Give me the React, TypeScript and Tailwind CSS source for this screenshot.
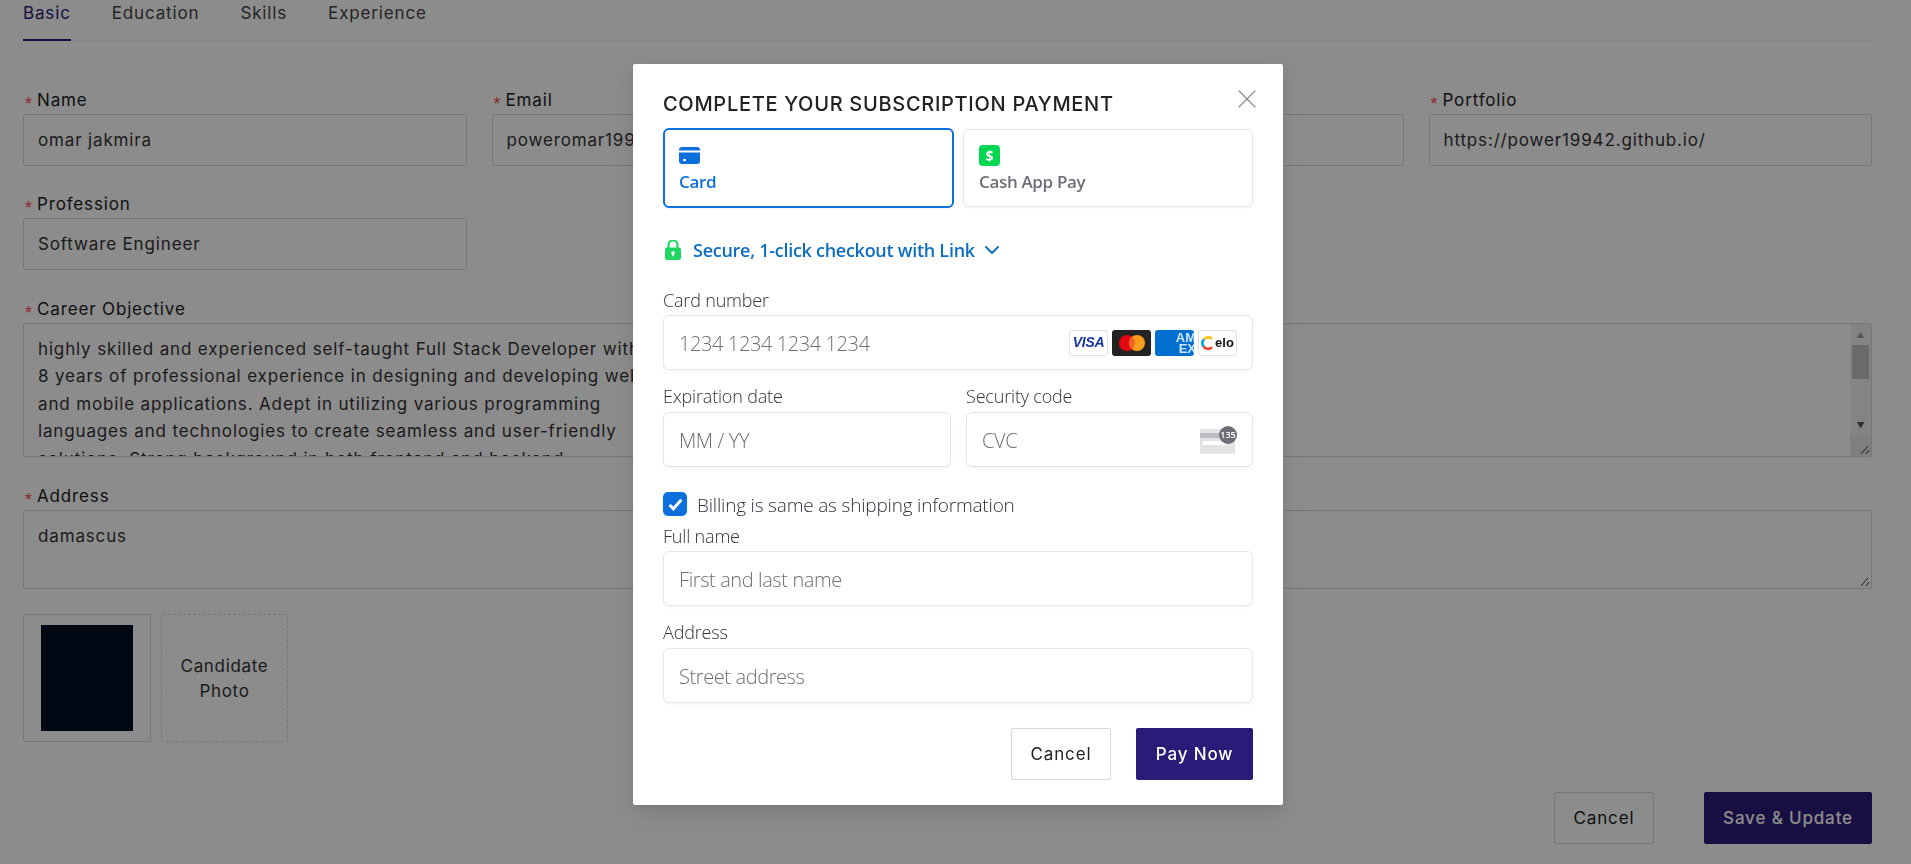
import { ChevronDown, X } from "lucide-react";

const pageFont = "font-['Inter',sans-serif]";
const stripeFont = "font-['Open_Sans',sans-serif]";

const objective = `highly skilled and experienced self-taught Full Stack Developer with
8 years of professional experience in designing and developing web
and mobile applications. Adept in utilizing various programming
languages and technologies to create seamless and user-friendly
solutions. Strong background in both frontend and backend`;

function Label({ text }: { text: string }) {
  return (
    <div className="flex h-[24px] items-center mb-[2px] pt-[2px] text-[17px] tracking-[0.05em] text-[#222]">
      <span className="w-[14px] translate-y-[4px] font-['Liberation_Mono',monospace] text-[18px] tracking-normal text-[#ff4d4f]">*</span>
      {text}
    </div>
  );
}

function Field({ label, value }: { label: string; value: string }) {
  return (
    <div>
      <Label text={label} />
      <input
        readOnly
        defaultValue={value}
        className="block w-full h-[52px] px-[14px] border border-[#d9d9d9] rounded-[2px] bg-white text-[17px] tracking-[0.05em] text-[#333] outline-none"
      />
    </div>
  );
}

function ResizeGrip() {
  return (
    <svg width="10" height="10" viewBox="0 0 10 10" className="text-[#333]">
      <path d="M1 9 8 1M6 9 9 5" stroke="currentColor" strokeWidth="1" fill="none" />
    </svg>
  );
}

function Background() {
  return (
    <div className={`${pageFont} h-[864px] overflow-hidden bg-white pl-[23px] pr-[39px]`}>
      <div className="flex gap-[41px] border-b border-[#f0f0f0] h-[41px] text-[17px] tracking-[0.05em] text-[#444]">
        <div className="h-[41px] leading-[26px] border-b-2 border-[#2b1b78] text-[#2b1b78]">Basic</div>
        <div className="leading-[26px]">Education</div>
        <div className="leading-[26px]">Skills</div>
        <div className="leading-[26px]">Experience</div>
      </div>

      <div className="grid grid-cols-4 gap-x-[25px] mt-[47px]">
        <Field label="Name" value="omar jakmira" />
        <Field label="Email" value="poweromar1994@gmail.com" />
        <Field label="Phone" value="" />
        <Field label="Portfolio" value="https://power19942.github.io/" />
      </div>

      <div className="grid grid-cols-4 gap-x-[25px] mt-[26px]">
        <Field label="Profession" value="Software Engineer" />
      </div>

      <div className="mt-[27px]">
        <Label text="Career Objective" />
        <div className="flex h-[134px] border border-[#d9d9d9] rounded-[2px] overflow-hidden">
          <div className="flex-1 min-w-0 px-[14px] pt-[12px] whitespace-pre-line text-[17px] leading-[27.4px] tracking-[0.05em] text-[#333]">
            {objective}
          </div>
          <div className="flex flex-col w-[21px] bg-[#f1f1f1] shrink-0">
            <div className="flex h-[21px] items-center justify-center text-[8px] leading-none text-[#a3a3a3]">▲</div>
            <div className="h-[34px] mx-[2px] bg-[#c1c1c1]" />
            <div className="flex flex-1 items-end justify-center pb-[6px] text-[8px] leading-none text-[#505050]">▼</div>
            <div className="flex h-[21px] items-end justify-end bg-[#e8e8e8] p-[1px]">
              <ResizeGrip />
            </div>
          </div>
        </div>
      </div>

      <div className="mt-[27px]">
        <Label text="Address" />
        <div className="flex h-[79px] flex-col border border-[#d9d9d9] rounded-[2px] px-[14px] pt-[12px] text-[17px] leading-[27px] tracking-[0.05em] text-[#333]">
          <div className="flex-1">damascus</div>
          <div className="flex justify-end -mr-[13px] mb-[1px]">
            <ResizeGrip />
          </div>
        </div>
      </div>

      <div className="flex gap-[10px] mt-[25px]">
        <div className="flex h-[128px] w-[128px] items-center justify-center border border-[#d9d9d9] rounded-[2px]">
          <div className="h-[106px] w-[92px] bg-[#010d24]" />
        </div>
        <div className="flex h-[128px] w-[127px] items-center justify-center border border-dashed border-[#d9d9d9] rounded-[2px] pt-[2px] text-center text-[17px] leading-[25px] tracking-[0.04em] text-[#333]">
          <div>
            Candidate
            <br />
            Photo
          </div>
        </div>
      </div>

      <div className="flex justify-end gap-[50px] mt-[50px]">
        <button className="h-[52px] w-[100px] border border-[#d9d9d9] rounded-[2px] pt-[2px] text-[17px] tracking-[0.05em] text-[#222]">Cancel</button>
        <button className="h-[52px] w-[168px] rounded-[2px] bg-[#2b1b78] pt-[2px] text-[17px] font-medium tracking-[0.05em] text-white">Save &amp; Update</button>
      </div>
    </div>
  );
}

function CardIcon() {
  return (
    <svg width="21" height="17" viewBox="0 0 21 17" className="text-[#0d6fdc]">
      <path d="M0 3a3 3 0 0 1 3-3h15a3 3 0 0 1 3 3v.5H0z" fill="currentColor" />
      <path d="M0 5.5h21V14a3 3 0 0 1-3 3H3a3 3 0 0 1-3-3z" fill="currentColor" />
      <rect x="4" y="12" width="3" height="2" fill="#fff" />
    </svg>
  );
}

function LockIcon() {
  return (
    <svg width="16" height="20" viewBox="0 0 16 20">
      <path d="M3.5 8V5a4.500 4.500 0 0 1 9 0v3" stroke="#1ed760" strokeWidth="2.200" fill="none" />
      <rect x="0" y="7.500" width="16" height="12.500" rx="2" fill="#1ed760" />
      <circle cx="8" cy="13" r="1.800" fill="#fff" />
      <rect x="7.200" y="13" width="1.600" height="3.200" fill="#fff" />
    </svg>
  );
}

function LogoBox({ className = "", children }: { className?: string; children: React.ReactNode }) {
  return <div className={`flex h-[26px] w-[39px] items-center justify-center overflow-hidden rounded-[3px] ${className}`}>{children}</div>;
}

function CardLogos() {
  return (
    <div className="flex gap-[4px]">
      <LogoBox className="border border-[#e0e0e0] bg-white">
        <span className="font-['Liberation_Sans',sans-serif] text-[14px] font-bold italic tracking-[-0.02em] text-[#1434a4]">VISA</span>
      </LogoBox>
      <LogoBox className="bg-[#232323]">
        <svg width="28" height="18" viewBox="0 0 28 18">
          <circle cx="9" cy="9" r="8" fill="#e30613" />
          <circle cx="19" cy="9" r="8" fill="#f99d1c" />
          <path d="M14 2.800a8 8 0 0 1 0 12.400a8 8 0 0 1 0-12.400z" fill="#f26122" />
        </svg>
      </LogoBox>
      <LogoBox className="bg-[#006fcf] !justify-end">
        <div className="font-['Liberation_Sans',sans-serif] text-[13px] leading-[11px] font-bold text-[#cfe5fb] text-right w-[24px] -mr-[2px] whitespace-nowrap">
          AM
          <br />
          EX
        </div>
      </LogoBox>
      <LogoBox className="gap-[1px] border border-[#e0e0e0] bg-white">
        <svg width="13" height="14" viewBox="0 0 13 14" fill="none" strokeWidth="2.600">
          <path d="M3 3.400A5.500 5.500 0 0 1 11 2.800" stroke="#fdc20e" />
          <path d="M2.600 10.400A5.500 5.500 0 0 1 3 3.400" stroke="#00a4e0" />
          <path d="M11 11.200A5.500 5.500 0 0 1 2.600 10.400" stroke="#ef4123" />
        </svg>
        <span className="font-['Liberation_Sans',sans-serif] text-[13px] font-bold leading-none text-[#111]">elo</span>
      </LogoBox>
    </div>
  );
}

function CvcIcon() {
  return (
    <div className="relative h-[28px] w-[37px]">
      <div className="absolute left-0 bottom-0 h-[25px] w-[35px] bg-[#e3e3e5]">
        <div className="mt-[4px] h-[5px] bg-[#bdbdc1]" />
        <div className="mt-[3px] ml-[3px] h-[4px] w-[24px] bg-white" />
      </div>
      <div className="absolute right-0 top-0 flex h-[18px] w-[18px] items-center justify-center rounded-full bg-[#6d6e78] text-[9px] font-semibold text-white">135</div>
    </div>
  );
}

function StripeLabel({ text }: { text: string }) {
  return <div className="h-[22px] text-[18px] leading-[22px] font-light tracking-[-0.01em] text-[#30313d]">{text}</div>;
}

const stripeBox = "flex h-[55px] items-center border border-[#e6e6e6] rounded-[6px] bg-white pl-[15px] pr-[15px] shadow-[0_1px_1px_rgba(0,0,0,0.03),0_3px_6px_rgba(0,0,0,0.02)]";
const stripeInput = "min-w-0 flex-1 bg-transparent pt-[2px] text-[20px] font-light tracking-[-0.02em] text-[#30313d] outline-none placeholder:text-[#6d6e78]";

function PaymentModal() {
  return (
    <div className="fixed inset-0 bg-black/45">
      <div className="ml-[633px] mt-[64px] h-[741px] w-[650px] rounded-[2px] bg-white px-[30px] pt-[27px] shadow-[0_6px_16px_rgba(0,0,0,0.08),0_3px_6px_-4px_rgba(0,0,0,0.12),0_9px_28px_8px_rgba(0,0,0,0.05)]">
        <div className="flex h-[26px] items-center justify-between">
          <h2 className={`${pageFont} text-[20px] font-medium leading-[26px] tracking-[0.035em] text-[#222]`}>COMPLETE YOUR SUBSCRIPTION PAYMENT</h2>
          <X size={32} strokeWidth={0.9} className="text-[#8a8a8a] -mt-[10px] -mr-[10px]" />
        </div>

        <div className={stripeFont}>
          <div className="flex gap-[9px] mt-[11px]">
            <div className="h-[80px] w-[291px] border-2 border-[#0d6fdc] rounded-[6px] pl-[14px] pt-[17px] shadow-[0_1px_2px_rgba(0,0,0,0.06)]">
              <CardIcon />
              <div className="mt-[6px] text-[17px] font-semibold leading-[24px] tracking-[-0.02em] text-[#0d6fdc]">Card</div>
            </div>
            <div className="mt-[1px] h-[78px] w-[290px] border border-[#e6e6e6] rounded-[6px] pl-[15px] pt-[15px] shadow-[0_1px_2px_rgba(0,0,0,0.06)]">
              <div className="flex h-[21px] w-[21px] items-center justify-center rounded-[4px] bg-[#00d64f] text-[14px] font-bold leading-none text-white">$</div>
              <div className="mt-[4px] text-[17px] font-semibold leading-[24px] tracking-[-0.02em] text-[#6d6e78]">Cash App Pay</div>
            </div>
          </div>

          <div className="flex h-[24px] items-center mt-[30px] ml-[2px]">
            <LockIcon />
            <span className="ml-[12px] text-[18px] font-semibold tracking-[-0.015em] text-[#0d6fc4]">Secure, 1-click checkout with Link</span>
            <ChevronDown size={24} strokeWidth={2} className="ml-[5px] text-[#0d6fc4]" />
          </div>

          <div className="mt-[27px]">
            <StripeLabel text="Card number" />
            <div className={`${stripeBox} mt-[4px]`}>
              <input readOnly placeholder="1234 1234 1234 1234" className={stripeInput} />
              <CardLogos />
            </div>
          </div>

          <div className="flex gap-[15px] mt-[15px]">
            <div className="w-[288px]">
              <StripeLabel text="Expiration date" />
              <div className={`${stripeBox} mt-[5px]`}>
                <input readOnly placeholder="MM / YY" className={stripeInput} />
              </div>
            </div>
            <div className="w-[287px]">
              <StripeLabel text="Security code" />
              <div className={`${stripeBox} mt-[5px]`}>
                <input readOnly placeholder="CVC" className={stripeInput} />
                <CvcIcon />
              </div>
            </div>
          </div>

          <div className="flex h-[24px] items-center gap-[10px] mt-[25px]">
            <div className="flex h-[24px] w-[24px] items-center justify-center rounded-[5px] bg-[#0d6fdc]">
              <svg width="15" height="13" viewBox="0 0 14 12" fill="none">
                <path d="M1.500 6.500 5 10l7.500-8.500" stroke="#fff" strokeWidth="2.800" />
              </svg>
            </div>
            <span className="pt-[2px] text-[19px] font-light tracking-[-0.01em] text-[#30313d]">Billing is same as shipping information</span>
          </div>

          <div className="mt-[9px]">
            <StripeLabel text="Full name" />
            <div className={`${stripeBox} mt-[4px]`}>
              <input readOnly placeholder="First and last name" className={stripeInput} />
            </div>
          </div>

          <div className="mt-[15px]">
            <StripeLabel text="Address" />
            <div className={`${stripeBox} mt-[5px]`}>
              <input readOnly placeholder="Street address" className={stripeInput} />
            </div>
          </div>
        </div>

        <div className={`${pageFont} flex justify-end gap-[25px] mt-[25px]`}>
          <button className="h-[52px] w-[100px] border border-[#d9d9d9] rounded-[2px] pt-[2px] text-[17px] tracking-[0.05em] text-[#222]">Cancel</button>
          <button className="h-[52px] w-[117px] rounded-[2px] bg-[#2b1b78] pt-[2px] text-[17px] font-medium tracking-[0.05em] text-white">Pay Now</button>
        </div>
      </div>
    </div>
  );
}

export default function App() {
  return (
    <div className="relative">
      <Background />
      <PaymentModal />
    </div>
  );
}
